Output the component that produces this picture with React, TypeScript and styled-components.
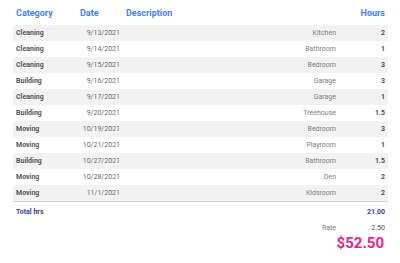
import styled, { createGlobalStyle } from "styled-components";

interface Entry {
  category: string;
  date: string;
  description: string;
  hours: number;
}

const entries: Entry[] = [
  { category: "Cleaning", date: "9/13/2021", description: "Kitchen", hours: 2 },
  { category: "Cleaning", date: "9/14/2021", description: "Bathroom", hours: 1 },
  { category: "Cleaning", date: "9/15/2021", description: "Bedroom", hours: 3 },
  { category: "Building", date: "9/16/2021", description: "Garage", hours: 3 },
  { category: "Cleaning", date: "9/17/2021", description: "Garage", hours: 1 },
  { category: "Building", date: "9/20/2021", description: "Treehouse", hours: 1.5 },
  { category: "Moving", date: "10/19/2021", description: "Bedroom", hours: 3 },
  { category: "Moving", date: "10/21/2021", description: "Playroom", hours: 1 },
  { category: "Building", date: "10/27/2021", description: "Bathroom", hours: 1.5 },
  { category: "Moving", date: "10/28/2021", description: "Den", hours: 2 },
  { category: "Moving", date: "11/1/2021", description: "Kidsroom", hours: 2 },
];

const RATE = 2.5;

const App = () => {
  const total = entries.reduce((sum, e) => sum + e.hours, 0);

  return (
    <Page>
      <GlobalStyle />
      <HeaderRow>
        <HeadCell>Category</HeadCell>
        <HeadCell>Date</HeadCell>
        <HeadCell>Description</HeadCell>
        <HeadCell $right>Hours</HeadCell>
      </HeaderRow>
      <Body>
        {entries.map((e, i) => (
          <Row key={i} $striped={i % 2 === 0}>
            <CategoryCell>{e.category}</CategoryCell>
            <DateCell>{e.date}</DateCell>
            <DescCell>{e.description}</DescCell>
            <HoursCell>{e.hours}</HoursCell>
          </Row>
        ))}
      </Body>
      <TotalRow>
        <span>Total hrs</span>
        <span>{total.toFixed(2)}</span>
      </TotalRow>
      <RateRow>
        <RateLabel>Rate</RateLabel>
        <RateValue>{RATE.toFixed(2)}</RateValue>
      </RateRow>
      <Amount>${(total * RATE).toFixed(2)}</Amount>
    </Page>
  );
};

export default App;

const GlobalStyle = createGlobalStyle`
  body {
    margin: 0;
    background: #fff;
    font-family: Roboto, "Liberation Sans", sans-serif;
  }
`;

const Page = styled.div`
  width: 375px;
  margin-left: 13px;
`;

const columns = "64px 46px 1fr 49px";

const HeaderRow = styled.div`
  display: grid;
  grid-template-columns: ${columns};
  height: 25px;
  align-items: center;
`;

const HeadCell = styled.div<{ $right?: boolean }>`
  font-size: 9px;
  font-weight: 700;
  color: #4a80ee;
  padding: 0 3px;
  text-align: ${(p) => (p.$right ? "right" : "left")};
`;

const Body = styled.div`
  border-bottom: 1px solid #cfcfcf;
`;

const Row = styled.div<{ $striped: boolean }>`
  display: grid;
  grid-template-columns: ${columns};
  height: 16px;
  align-items: center;
  background: ${(p) => (p.$striped ? "#f2f2f2" : "#fff")};
  font-size: 7px;
`;

const Cell = styled.div`
  padding: 0 3px;
`;

const CategoryCell = styled(Cell)`
  font-weight: 700;
  color: #58544f;
`;

const DateCell = styled(Cell)`
  text-align: right;
  color: #6d6a66;
`;

const DescCell = styled(Cell)`
  text-align: right;
  color: #7d7d7d;
`;

const HoursCell = styled(Cell)`
  text-align: right;
  font-weight: 700;
  color: #4f4f4f;
`;

const TotalRow = styled.div`
  display: flex;
  justify-content: space-between;
  align-items: center;
  height: 20px;
  padding: 0 3px;
  font-size: 7px;
  font-weight: 700;
  color: #3b3f93;
`;

const RateRow = styled.div`
  display: grid;
  grid-template-columns: 1fr 49px;
  height: 12px;
  align-items: center;
  font-size: 7px;
  color: #777;
`;

const RateLabel = styled.div`
  text-align: right;
  padding: 0 3px;
`;

const RateValue = styled.div`
  text-align: right;
  padding: 0 3px;
  color: #4a4a4a;
`;

const Amount = styled.div`
  text-align: right;
  padding: 0 4px 0 3px;
  font-size: 15px;
  font-weight: 700;
  color: #ea1e8a;
`;
